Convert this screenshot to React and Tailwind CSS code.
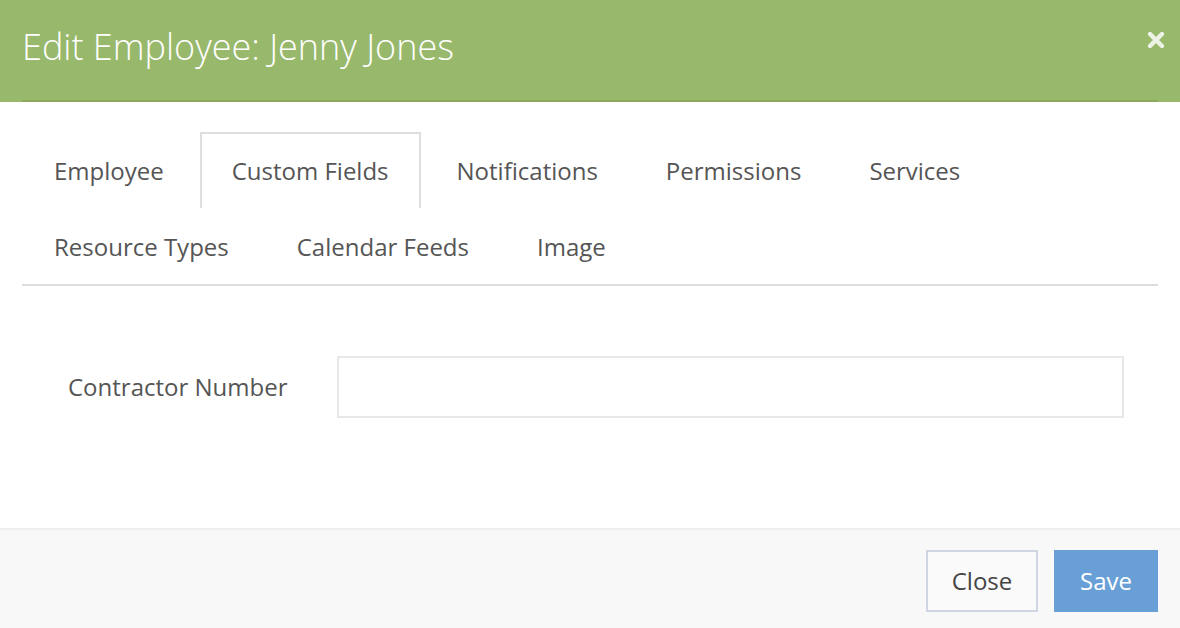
import React, { useState } from 'react';

const tabs = [
  'Employee',
  'Custom Fields',
  'Notifications',
  'Permissions',
  'Services',
  'Resource Types',
  'Calendar Feeds',
  'Image'
];

const App = () => {
  const [active, setActive] = useState('Custom Fields');

  return (
    <div className="w-[1180px] h-[628px] bg-white flex flex-col overflow-hidden" style={{ fontFamily: '"Open Sans", sans-serif' }}>
      {/* Header */}
      <div className="relative bg-[#98b86c] h-[102px] pl-[22px] pr-[22px] flex">
        <div className="flex-1 flex items-center border-b-2 border-[#89a85e]">
          <h1 className="text-[36px] font-light text-white leading-none -mt-[6px]">Edit Employee: Jenny Jones</h1>
        </div>
        <button className="absolute right-[13px] top-[29px] w-[22px] h-[22px] flex items-center justify-center text-[#eef3e6]">
          <svg viewBox="0 0 20 20" className="w-[20px] h-[20px]" fill="none" stroke="currentColor" strokeWidth="4.4" strokeLinecap="round">
            <path d="M4 4 L16 16 M16 4 L4 16" />
          </svg>
        </button>
      </div>

      {/* Tabs */}
      <div className="px-[22px] pt-[30px]">
        <ul className="flex flex-wrap border-b-2 border-[#dedede]">
          {tabs.map(tab => (
            <li key={tab}>
              <button
                onClick={() => setActive(tab)}
                className={`h-[76px] px-[30px] mr-[4px] flex items-center text-[24px] text-[#555] border-2 border-b-0 ${
                  active === tab ? 'border-[#dedede] bg-white' : 'border-transparent'
                }`}
              >
                {tab}
              </button>
            </li>
          ))}
        </ul>
      </div>

      {/* Body */}
      <div className="flex-1 pt-[70px] pl-[68px] pr-[56px]">
        <div className="flex items-center">
          <label className="w-[269px] text-[24px] text-[#555]">Contractor Number</label>
          <input type="text" className="flex-1 h-[62px] border-2 border-[#e8e8e8] px-3 text-[20px] outline-none" />
        </div>
      </div>

      {/* Footer */}
      <div className="h-[100px] bg-[#f8f8f8] border-t-2 border-[#eeeeee] flex items-start justify-end gap-[16px] pt-[20px] pr-[22px]">
        <button className="w-[112px] h-[62px] border-2 border-[#cfd6e1] text-[24px] text-[#444] bg-[#fafafa]">Close</button>
        <button className="w-[104px] h-[62px] bg-[#689fd6] text-[24px] text-white">Save</button>
      </div>
    </div>
  );
};

export default App;
